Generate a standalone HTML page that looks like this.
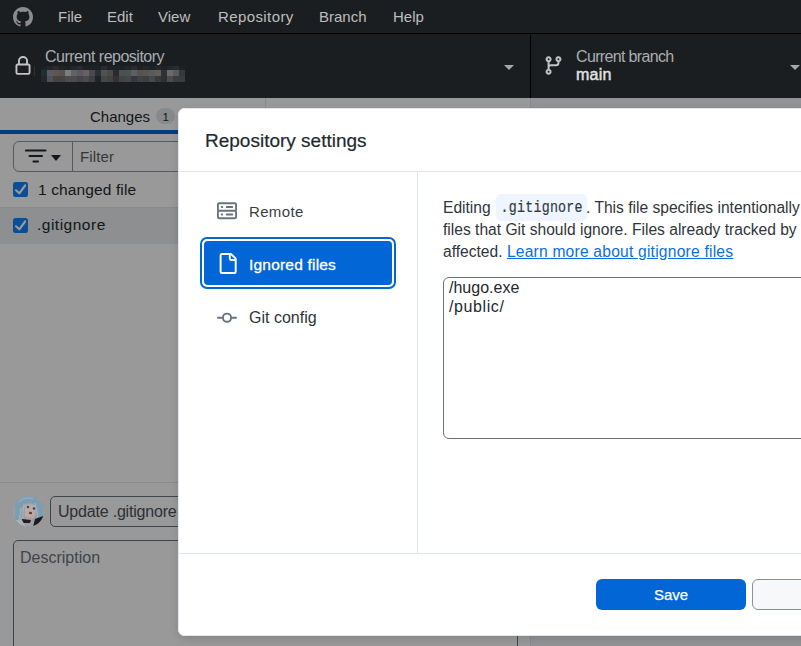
<!DOCTYPE html>
<html><head><meta charset="utf-8">
<style>
*{box-sizing:border-box;margin:0;padding:0}
html,body{width:801px;height:646px;overflow:hidden;font-family:"Liberation Sans",sans-serif;background:#fff;color:#24292e}
.a{position:absolute;white-space:pre;line-height:1}
#app{position:absolute;left:0;top:0;width:801px;height:646px;overflow:hidden}
#titlebar{position:absolute;z-index:5;left:0;top:0;width:801px;height:34px;background:#1b1e21;border-bottom:1px solid #000}
.m{position:absolute;top:9px;font-size:15px;line-height:1;color:#bdbdbd}
#toolbar{position:absolute;z-index:5;left:0;top:34px;width:801px;height:64px;background:#1b1e21}
.tlabel{position:absolute;font-size:16px;line-height:1;color:#a9adb1;white-space:pre}
.caret{position:absolute;width:0;height:0;border-left:5px solid transparent;border-right:5px solid transparent;border-top:5px solid #fff}
#overlay{position:absolute;left:0;top:0;width:801px;height:646px;background:rgba(0,0,0,0.4)}
#modal{position:absolute;left:178px;top:108px;width:820px;height:528px;background:#fff;border-radius:6.5px;overflow:hidden;box-shadow:0 3px 10px rgba(0,0,0,.12)}
#modal::after{content:'';position:absolute;left:0;top:0;right:0;bottom:0;border:1px solid #e3e6ea;border-radius:6.5px;pointer-events:none}
.mos{position:absolute;z-index:6;left:41px;top:66px;display:grid;grid-template-columns:repeat(24,6px);grid-template-rows:4px 6px 6px}
.mos i{display:block}
</style></head>
<body>
<div id="app">
  <div id="titlebar">
    <svg style="position:absolute;left:13px;top:7px" width="20" height="20" viewBox="0 0 16 16"><path fill="#8c8c8c" d="M8 0c4.42 0 8 3.58 8 8a8.013 8.013 0 0 1-5.45 7.59c-.4.08-.55-.17-.55-.38 0-.27.01-1.13.01-2.2 0-.75-.25-1.23-.54-1.48 1.78-.2 3.65-.88 3.65-3.95 0-.88-.31-1.59-.82-2.15.08-.2.36-1.02-.08-2.12 0 0-.67-.22-2.2.82-.64-.18-1.32-.27-2-.27-.68 0-1.36.09-2 .27-1.53-1.03-2.2-.82-2.2-.82-.44 1.1-.16 1.92-.08 2.12-.51.56-.82 1.28-.82 2.15 0 3.06 1.86 3.75 3.64 3.95-.23.2-.44.55-.51 1.07-.46.21-1.61.55-2.33-.66-.15-.24-.6-.83-1.23-.82-.67.01-.27.38.01.53.34.19.73.9.82 1.13.16.45.68 1.31 2.69.94 0 .67.01 1.3.01 1.49 0 .21-.15.45-.55.38A7.995 7.995 0 0 1 0 8c0-4.42 3.58-8 8-8Z"/></svg>
    <span class="m" style="left:58px">File</span>
    <span class="m" style="left:107px">Edit</span>
    <span class="m" style="left:158px">View</span>
    <span class="m" style="left:218px;letter-spacing:.4px">Repository</span>
    <span class="m" style="left:319px">Branch</span>
    <span class="m" style="left:393px">Help</span>
  </div>
  <div id="toolbar">
    <svg style="position:absolute;left:13px;top:22px" width="20" height="20" viewBox="0 0 16 16"><path fill="#c4c4c4" d="M4 4a4 4 0 0 1 8 0v2h.25c.966 0 1.750.784 1.75 1.75v5.5A1.75 1.75 0 0 1 12.25 15h-8.5A1.75 1.75 0 0 1 2 13.25v-5.5C2 6.784 2.784 6 3.75 6H4Zm8.25 3.5h-8.5a.25.25 0 0 0-.25.25v5.5c0 .138.112.25.25.25h8.5a.25.25 0 0 0 .25-.25v-5.5a.25.25 0 0 0-.25-.25ZM10.5 6V4a2.5 2.5 0 1 0-5 0v2Z"/></svg>
    <span class="tlabel" style="left:45px;top:15px;letter-spacing:-.5px">Current repository</span>
    <div class="caret" style="left:503.5px;top:30.6px;border-top-color:#a8a8a8"></div>
    <div style="position:absolute;left:530px;top:0;width:1px;height:64px;background:#000"></div>
    <svg style="position:absolute;left:544px;top:56px;display:none"></svg>
    <svg style="position:absolute;left:543px;top:21px" width="21" height="21" viewBox="0 0 16 16"><path fill="#c4c4c4" d="M9.5 3.25a2.25 2.25 0 1 1 3 2.122V6A2.5 2.5 0 0 1 10 8.5H6a1 1 0 0 0-1 1v1.128a2.251 2.251 0 1 1-1.5 0V5.372a2.25 2.25 0 1 1 1.5 0v1.836A2.493 2.493 0 0 1 6 7h4a1 1 0 0 0 1-1v-.628A2.25 2.25 0 0 1 9.5 3.25Zm-6 0a.75.75 0 1 0 1.5 0 .75.75 0 0 0-1.5 0Zm8.25-.75a.75.75 0 1 0 0 1.5.75.75 0 0 0 0-1.5ZM4.25 12a.75.75 0 1 0 0 1.5.75.75 0 0 0 0-1.5Z"/></svg>
    <span class="tlabel" style="left:576px;top:15px;letter-spacing:-.65px">Current branch</span>
    <span class="tlabel" style="left:576px;top:33px;color:#e2e2e2;-webkit-text-stroke:.45px #e2e2e2;letter-spacing:.2px">main</span>
    <div class="caret" style="left:790px;top:30.6px;border-top-color:#a8a8a8"></div>
  </div>
  <div style="position:absolute;left:531px;top:98px;width:270px;height:548px;background:#f4f6f8"></div>
  <!-- sidebar -->
  <div style="position:absolute;left:0;top:98px;width:531px;height:548px;background:#fff;border-right:1px solid #e1e4e8">
    <!-- tabs -->
    <div style="position:absolute;left:0;top:0;width:530px;height:36px;border-bottom:1px solid #e1e4e8"></div>
    <div style="position:absolute;left:265px;top:0;width:1px;height:36px;background:#e1e4e8"></div>
    <div style="position:absolute;left:0;top:32px;width:265px;height:4px;background:#0366d6"></div>
    <span class="a" style="left:90px;top:11px;font-size:15px">Changes</span>
    <div style="position:absolute;left:156px;top:10px;width:19px;height:16px;border-radius:8px;background:#e1e4e8"></div>
    <span class="a" style="left:162.5px;top:13.5px;font-size:11.5px">1</span>
    <!-- filter -->
    <div style="position:absolute;left:13px;top:43px;width:504px;height:31px;border:1px solid #8f969d;border-radius:6px;background:#fff"></div>
    <div style="position:absolute;left:72px;top:43px;width:1px;height:31px;background:#8f969d"></div>
    <svg style="position:absolute;left:25px;top:51px" width="22" height="14" viewBox="0 0 22 14"><path d="M1 1.5h19.5M4.5 7h12.5M8.5 12.5h4.5" stroke="#24292e" stroke-width="2.1" stroke-linecap="round"/></svg>
    <div class="caret" style="left:51px;top:57px;border-top-color:#24292e;border-left-width:5px;border-right-width:5px;border-top-width:6px"></div>
    <span class="a" style="left:80px;top:51px;font-size:15px;color:#586069;letter-spacing:.15px">Filter</span>
    <!-- rows -->
    <div style="position:absolute;left:0;top:109px;width:530px;height:1px;background:#e1e4e8"></div>
    <div style="position:absolute;left:13px;top:84px;width:15px;height:15px;border-radius:2.5px;background:#1580fa"></div>
    <svg style="position:absolute;left:13px;top:84px" width="15" height="15" viewBox="0 0 15 15"><path d="M3 8.3l3.3 3 5.8-7.8" fill="none" stroke="#fff" stroke-width="2.2" stroke-linecap="round" stroke-linejoin="round"/></svg>
    <span class="a" style="left:38px;top:84px;font-size:15.5px;letter-spacing:.12px">1 changed file</span>
    <div style="position:absolute;left:0;top:110px;width:530px;height:36px;background:#ebeef1"></div>
    <div style="position:absolute;left:13px;top:120px;width:15px;height:15px;border-radius:2.5px;background:#1580fa"></div>
    <svg style="position:absolute;left:13px;top:120px" width="15" height="15" viewBox="0 0 15 15"><path d="M3 8.3l3.3 3 5.8-7.8" fill="none" stroke="#fff" stroke-width="2.2" stroke-linecap="round" stroke-linejoin="round"/></svg>
    <span class="a" style="left:37px;top:119px;font-size:15.5px;letter-spacing:.5px">.gitignore</span>
    <!-- commit area -->
    <div style="position:absolute;left:0;top:384px;width:530px;height:1px;background:#e1e4e8"></div>
    
    <div style="position:absolute;left:50px;top:398px;width:467px;height:31px;border:1px solid #6a737d;border-radius:5px;background:#fff"></div>
    <span class="a" style="left:58px;top:406px;font-size:16px;color:#4d535a;letter-spacing:-.2px">Update .gitignore</span>
    <div style="position:absolute;left:13px;top:442px;width:505px;height:150px;border:1px solid #6a737d;border-radius:5px;background:#fff"></div>
    <span class="a" style="left:20px;top:452px;font-size:16px;color:#6a737d">Description</span>
  </div>
</div>
<div id="overlay"></div>
<div class="mos" id="mos"></div>
<div style="position:absolute;z-index:6;left:34px;top:66px;width:1px;height:10px;background:#2e3236"></div>
<svg style="position:absolute;left:13px;top:496px" width="31" height="31" viewBox="0 0 31 31"><defs><clipPath id="cp"><circle cx="15.5" cy="15.5" r="15.3"/></clipPath></defs><g clip-path="url(#cp)"><rect width="31" height="31" fill="#9c9ea6"/>
<path d="M2 10C4 3 10 0 16 0s12 3 14 9v10l-4 6-2-12c-1-4-4-6-8-6s-7 2-8 6L6 28H2z" fill="#7d9db4"/>
<path d="M6 6c3-4 9-5 14-3M8 12l-2 14M11 8L9 26M22 7l3 14" stroke="#98b4c8" stroke-width="1.2" fill="none"/>
<path d="M12 9c3-1 8-1 11 1l-1 9c-1 3-3 4-5 4s-4-1-5-3z" fill="#bcaaa4"/>
<circle cx="15" cy="11" r="1.2" fill="#3a3a6a"/><circle cx="21" cy="12.5" r="1.2" fill="#3a3a6a"/>
<ellipse cx="17.5" cy="17" rx="1.6" ry="1.2" fill="#5a3a40"/>
<path d="M13 21h6v4h-6z" fill="#b89c94"/>
<path d="M9 23l9 1-1 3H9z" fill="#1e1e24"/>
<path d="M22 23l8-3v11h-10z" fill="#1a1a20"/>
<path d="M3 24l6 0 4 7H3z" fill="#aab0ba"/>
</g></svg>
<div id="modal">
  <div style="position:absolute;left:0;top:0;width:820px;height:64px;border-bottom:1px solid #e1e4e8"></div>
  <span class="a" style="left:27px;top:23px;font-size:19px;-webkit-text-stroke:.2px #24292e">Repository settings</span>
  <div style="position:absolute;left:239px;top:64px;width:1px;height:381px;background:#e1e4e8"></div>
  <div style="position:absolute;left:0;top:445px;width:820px;height:1px;background:#e1e4e8"></div>
  <!-- nav -->
  <svg style="position:absolute;left:39px;top:93px" width="20" height="20" viewBox="0 0 16 16"><path fill="#6a737d" d="M1.75 1h12.5c.966 0 1.75.784 1.75 1.75v4c0 .372-.116.717-.314 1 .198.283.314.628.314 1v4a1.75 1.75 0 0 1-1.75 1.75H1.75A1.75 1.75 0 0 1 0 12.75v-4c0-.358.109-.707.314-1a1.739 1.739 0 0 1-.314-1v-4C0 1.784.784 1 1.750 1ZM1.5 2.75v4c0 .138.112.25.25.25h12.5a.25.25 0 0 0 .25-.25v-4a.25.25 0 0 0-.25-.25H1.75a.25.25 0 0 0-.25.25Zm.25 5.75a.25.25 0 0 0-.25.25v4c0 .138.112.25.25.25h12.5a.25.25 0 0 0 .25-.25v-4a.25.25 0 0 0-.25-.25ZM7 4.75A.75.75 0 0 1 7.75 4h4.5a.75.75 0 0 1 0 1.5h-4.5A.75.75 0 0 1 7 4.75ZM7.75 10h4.5a.75.75 0 0 1 0 1.5h-4.5a.75.75 0 0 1 0-1.5ZM3 4.75A.75.75 0 0 1 3.75 4h.5a.75.75 0 0 1 0 1.5h-.5A.75.75 0 0 1 3 4.75ZM3.75 10h.5a.75.75 0 0 1 0 1.5h-.5a.75.75 0 0 1 0-1.5Z"/></svg>
  <span class="a" style="left:71px;top:96px;font-size:15px;color:#3a3f45;letter-spacing:.35px">Remote</span>
  <div style="position:absolute;left:22px;top:129px;width:196px;height:52px;border-radius:7px;border:2px solid #0366d6;padding:2px"><div style="width:100%;height:100%;background:#0366d6;border-radius:4px"></div></div>
  <svg style="position:absolute;left:38.5px;top:145px" width="21" height="21" viewBox="0 0 16 16"><path fill="#fff" d="M2 1.75C2 .784 2.784 0 3.75 0h6.586c.464 0 .909.184 1.237.513l2.914 2.914c.329.328.513.773.513 1.237v9.586A1.75 1.75 0 0 1 13.25 16h-9.5A1.75 1.75 0 0 1 2 14.25Zm1.75-.25a.25.25 0 0 0-.25.25v12.5c0 .138.112.25.25.25h9.5a.25.25 0 0 0 .25-.25V6h-2.75A1.75 1.75 0 0 1 9 4.25V1.5Zm6.75.062V4.25c0 .138.112.25.25.25h2.688l-.011-.013-2.914-2.914-.013-.011Z"/></svg>
  <span class="a" style="left:71px;top:149px;font-size:15.5px;color:#fff;-webkit-text-stroke:.3px #fff;letter-spacing:.2px">Ignored files</span>
  <svg style="position:absolute;left:38px;top:200px" width="22" height="20" viewBox="0 0 16 16"><path fill="#6a737d" d="M11.93 8.5a4.002 4.002 0 0 1-7.86 0H.75a.75.75 0 0 1 0-1.5h3.32a4.002 4.002 0 0 1 7.86 0h3.32a.75.75 0 0 1 0 1.5Zm-1.43-.75a2.5 2.5 0 1 0-5 0 2.5 2.5 0 0 0 5 0Z"/></svg>
  <span class="a" style="left:71px;top:202px;font-size:16px;color:#2f353b">Git config</span>
  <!-- content -->
  <div style="position:absolute;left:318px;top:86px;width:91px;height:27px;border-radius:5px;background:#eef5fe"></div>
  <span class="a" style="left:265px;top:92px;font-size:15.6px;color:#30363c">Editing </span>
  <span class="a" style="left:322.5px;top:94px;font-family:'Liberation Mono';font-size:13.3px;color:#33383e;letter-spacing:.25px;-webkit-text-stroke:.15px #33383e;transform:scaleY(1.18);transform-origin:0 11px">.gitignore</span>
  <span class="a" style="left:408px;top:92px;font-size:15.6px;color:#30363c">. This file specifies intentionally untracked</span>
  <span class="a" style="left:265px;top:114px;font-size:15.6px;color:#30363c">files that Git should ignore. Files already tracked by Git are not</span>
  <span class="a" style="left:265px;top:136px;font-size:15.6px;color:#30363c">affected. <span style="color:#0a6fdf;text-decoration:underline;letter-spacing:.22px">Learn more about gitignore files</span></span>
  <div style="position:absolute;left:265px;top:169px;width:600px;height:162px;border:1px solid #6a737d;border-radius:6px"></div>
  <span class="a" style="left:271px;top:171px;font-size:16px;line-height:18.5px">/hugo.exe</span>
  <span class="a" style="left:271px;top:189.5px;font-size:16px;line-height:18.5px;letter-spacing:.6px">/public/</span>
  <!-- footer -->
  <div style="position:absolute;left:418px;top:471px;width:150px;height:31px;border-radius:6px;background:#0366d6"></div>
  <span class="a" style="left:476px;top:479px;font-size:15px;color:#fff;-webkit-text-stroke:.25px #fff">Save</span>
  <div style="position:absolute;left:574px;top:471px;width:150px;height:31px;border-radius:6px;background:#f6f8fa;border:1px solid #8a9199"></div>
</div>
<script>
var c=['#1e2226','#22262a','#2a2a30','#202428','#1e2226','#23272b','#2a2a30','#1e2226','#1e2226','#1e2226','#2a2a30','#1e2226','#1e2226','#1e2226','#22262a','#2a2a30','#1e2226','#22262a','#1e2226','#23272b','#1e2226','#23272b','#2a2a30','#1e2226',
'#1f3035','#5a5a66','#5f5650','#5a5250','#7a7e80','#5f6266','#5c5a60','#6a5f62','#4a4a4e','#2c3034','#4f5352','#4c4a48','#2a2a30','#4a5250','#4f5050','#5a6064','#585250','#5a5652','#5a5c5c','#625e5a','#2f3234','#6a6a6e','#5a5a5e','#38383a',
'#22282e','#4f5058','#45443f','#454440','#4a4d4c','#4c4c50','#48454a','#4c4a50','#3f3f42','#1f2327','#434748','#434240','#343236','#40444a','#45454a','#333844','#404247','#3c4044','#45494c','#3a3a3a','#2c3034','#4f4c48','#3a3e42','#3e3c3a'];
var m=document.getElementById('mos');for(var i=0;i<c.length;i++){var e=document.createElement('i');e.style.background=c[i];m.appendChild(e);}
</script>
</body></html>
